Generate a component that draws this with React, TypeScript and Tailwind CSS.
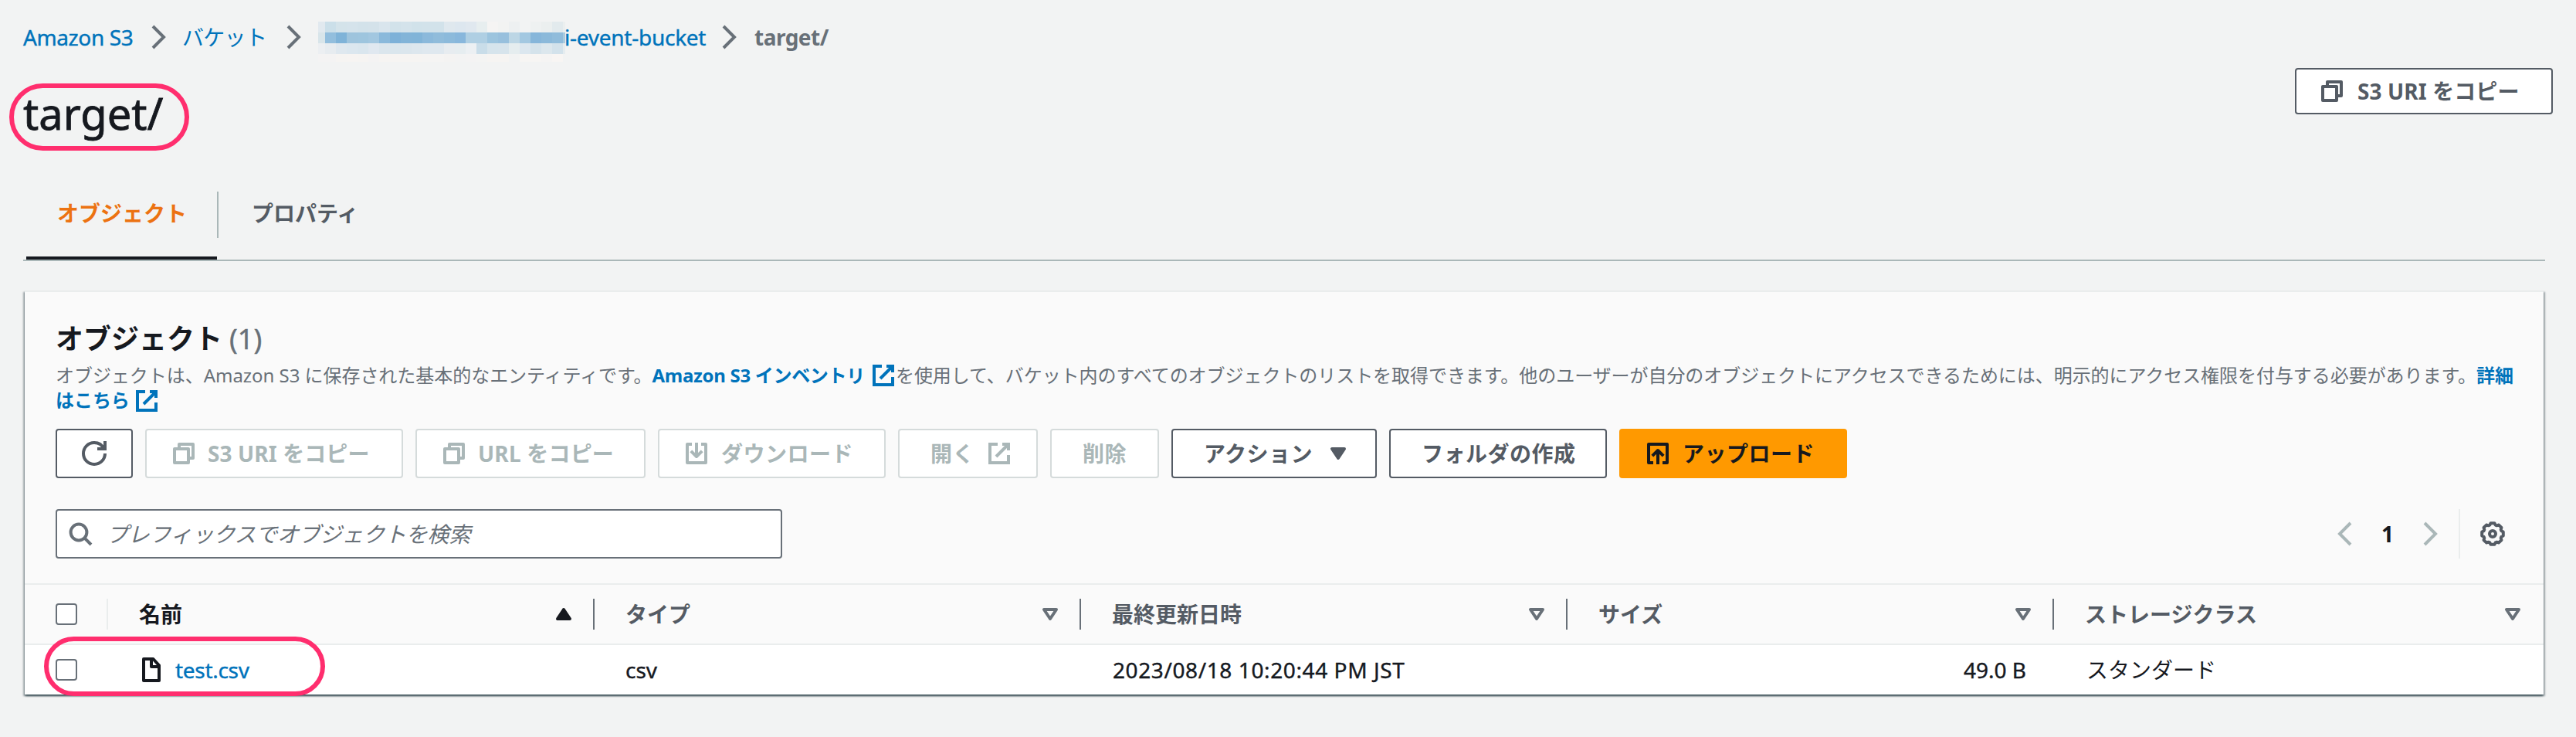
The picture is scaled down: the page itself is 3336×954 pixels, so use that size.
import type { ReactNode } from "react";

type IconName =
  | "copy" | "external" | "download" | "upload" | "refresh" | "search"
  | "chevronRight" | "chevronLeft" | "caret" | "sort" | "sortUp" | "file" | "gear";

const gearPoints = Array.from({ length: 8 })
  .flatMap((_, k) =>
    [[-18, 6.0], [-10, 7.0], [10, 7.0], [18, 6.0]].map(([offset, radius]) => {
      const angle = ((k * 45 + offset) * Math.PI) / 180;
      return `${(8 + radius * Math.sin(angle)).toFixed(2)},${(8 - radius * Math.cos(angle)).toFixed(2)}`;
    })
  )
  .join(" ");

const shapes: Record<IconName, ReactNode> = {
  copy: <path d="M2 5h9v9H2zM5 5V2h9v9h-3" />,
  external: <path d="M10 2h4v4M6 10l8-8M14 9v5H2V2h5" strokeLinejoin="miter" />,
  download: <path d="M11 2h3v12H2V2h3M8 1v9M4.4 6.4 8 10l3.6-3.6" />,
  upload: <path d="M5 14H2V2h12v12h-3M8 15V6M4.4 9.6 8 6l3.6 3.6" />,
  refresh: (
    <path d="M10 5h5V0M15 8a6.957 6.957 0 0 1-7 7 6.957 6.957 0 0 1-7-7 6.957 6.957 0 0 1 7-7 6.87 6.87 0 0 1 6.3 4" strokeLinejoin="miter" />
  ),
  search: (
    <>
      <circle cx="7" cy="7" r="5.2" />
      <path d="M10.7 10.7 15 15" />
    </>
  ),
  chevronRight: <path d="m4 1 7 7-7 7" strokeLinejoin="miter" />,
  chevronLeft: <path d="M12 1 5 8l7 7" strokeLinejoin="miter" />,
  caret: <path d="M4 5h8l-4 6z" fill="currentColor" />,
  sort: <path d="M4 5h8l-4 6z" />,
  sortUp: <path d="M4 11h8L8 5z" fill="currentColor" />,
  file: <path d="M3 1h6.2L13 5.2V15H3zM8 1v5h5" />,
  gear: (
    <>
      <polygon points={gearPoints} />
      <circle cx="8" cy="8" r="2" />
    </>
  ),
};

function Icon({ name, className = "" }: { name: IconName; className?: string }) {
  return (
    <svg
      viewBox="0 0 16 16"
      className={`h-8 w-8 shrink-0 overflow-visible ${className}`}
      fill="none"
      stroke="currentColor"
      strokeWidth={2}
      strokeLinejoin="round"
    >
      {shapes[name]}
    </svg>
  );
}

const maskRows = [
  { height: "h-[14px]", colors: "e1e9ef cbdfe9 d4e3ea d5e3eb d3e2ea d4e2ea d9e5ed d2e2ea d4e3eb d1e2ea d2e2ea d2e2ea dfe8ee dde7ef e0e8ef e7eeef f5f4f3 f2f3f2 edf0f1 f2f3f3 eef1f1 ebefef e2eaed ebefef" },
  { height: "h-[14px]", colors: "d8e5ea 92bedd 7fb3d8 9ec4dd 9ec5de a2c7e0 8ab9db 7db1d8 82b4d8 81b4d8 8bb9db 90bcdb 8cbadb 88b7dc afcfe3 afcfe3 9cc4de 98c0dd bcd6e5 a3c8e1 86b6da 8bb9da 90bcdb a9cbe0" },
  { height: "h-[14px]", colors: "eceff2 e7ecf0 dfe8ef dce7ef dae6ee e0e8f0 dbe6ed dae6ed dbe6ed dde7ee dfe8ef dfe8ef e7ecf0 e6edf0 ecf0f3 c9dde9 d6e4ec d7e4ec e5edef dce7ef d5e3eb dce7ed d3e2eb e5ecef" },
  { height: "h-[10px]", colors: "f4f3f3 f4f3f3 f6f4f2 f7f4f2 f6f4f2 f4f3f3 f6f4f2 f6f4f2 f6f4f2 f6f4f2 f5f4f3 f5f4f3 f4f3f2 f3f3f3 f4f3f3 f4f4f3 f6f4f2 f6f4f2 f2f3f3 f7f5f3 f7f5f3 f5f4f3 f8f5f3 f2f3f3" },
];

function MaskedName() {
  return (
    <div className="w-[320px]">
      {maskRows.map((row, i) => (
        <div key={i} className={`grid grid-cols-[9px_repeat(22,14px)_3px] ${row.height}`}>
          {row.colors.split(" ").map((c, j) => (
            <div key={j} style={{ backgroundColor: `#${c}` }} />
          ))}
        </div>
      ))}
    </div>
  );
}

function Button({
  children,
  className = "",
  disabled = false,
}: {
  children: ReactNode;
  className?: string;
  disabled?: boolean;
}) {
  const tone = disabled ? "border-[#d5dbdb] text-[#aab7b8]" : "border-[#545b64] text-[#545b64]";
  return (
    <button
      className={`flex shrink-0 items-center whitespace-nowrap rounded-[4px] border-2 bg-white text-[28px] font-bold tracking-[0.5px] ${tone} ${className}`}
    >
      {children}
    </button>
  );
}

function Checkbox() {
  return <div className="h-7 w-7 rounded-[4px] border-2 border-[#687078] bg-white" />;
}

const columns = [
  { label: "名前", sorted: true },
  { label: "タイプ" },
  { label: "最終更新日時" },
  { label: "サイズ" },
  { label: "ストレージクラス" },
];

const gridCols = "grid grid-cols-[108px_630px_630px_630px_630px_634px]";

export default function App() {
  return (
    <div className="relative h-[954px] w-[3336px] overflow-hidden bg-[#f2f3f3] text-[28px] leading-[40px] text-[#16191f] [font-family:'Noto_Sans','Noto_Sans_CJK_JP',sans-serif]">
      <nav className="flex h-[88px] items-start pl-[30px] pt-7 text-[#0073bb]">
        <span className="w-[160px] whitespace-nowrap tracking-[-0.4px] [-webkit-text-stroke:0.4px]">Amazon S3</span>
        <Icon name="chevronRight" className="mt-1 text-[#687078]" />
        <span className="ml-[14px] w-[129px] whitespace-nowrap tracking-[-0.7px]">バケット</span>
        <Icon name="chevronRight" className="mt-1 text-[#687078]" />
        <div className="ml-[15px]">
          <MaskedName />
        </div>
        <span className="-ml-px w-[198px] whitespace-nowrap tracking-[-0.25px] [-webkit-text-stroke:0.4px]">i-event-bucket</span>
        <Icon name="chevronRight" className="mt-1 text-[#687078]" />
        <span className="ml-4 font-bold tracking-[-0.5px] text-[#687078]">target/</span>
      </nav>

      <header className="flex h-[148px] items-start justify-between pl-[30px] pr-[30px]">
        <h1 className="mt-[22px] text-[56px] leading-[72px] [-webkit-text-stroke:0.8px]">target/</h1>
        <Button className="h-[60px] w-[334px] pl-8">
          <Icon name="copy" className="-ml-[2px]" />
          <span className="ml-[17px] tracking-[0.1px]">S3 URI をコピー</span>
        </Button>
      </header>

      <div className="ml-[30px] flex h-[102px] w-[3266px] items-stretch border-b-2 border-[#aab7b8] font-bold">
        <div className="ml-1 w-[247px] border-b-4 border-[#16191f] pl-10 pt-5 text-[#ec7211]">
          オブジェクト
        </div>
        <div className="mt-3 h-[60px] w-[2px] bg-[#aab7b8]" />
        <div className="pl-[43px] pt-5 text-[#545b64]">プロパティ</div>
      </div>

      <section className="ml-8 mt-[38px] w-[3262px] border-t-2 border-[#eaeded] bg-white shadow-[0_2px_2px_0_rgba(0,28,36,0.5),2px_2px_2px_0_rgba(0,28,36,0.3),-2px_2px_2px_0_rgba(0,28,36,0.3)]">
        <div className="h-[377px] bg-[#fafafa] pl-10">
          <h2 className="h-[92px] pt-[37px] text-[36px] font-bold leading-[48px]">
            オブジェクト<span className="ml-[9px] font-normal text-[#687078] [-webkit-text-stroke:0.4px]">(1)</span>
          </h2>
          <p className="h-[85px] whitespace-nowrap text-[24px] leading-8 tracking-[-0.05px] text-[#687078]">
            <span className="tracking-[-0.04px]">オブジェクトは、Amazon S3 に保存された基本的なエンティティです。</span>
            <a className="font-bold tracking-[-0.3px] text-[#0073bb]">
              Amazon S3 インベントリ
              <Icon name="external" className="-mt-1 ml-2 inline-block align-middle" />
            </a>
            を使用して、バケット内のすべてのオブジェクトのリストを取得できます。他のユーザーが自分のオブジェクトにアクセスできるためには、明示的にアクセス権限を付与する必要があります。
            <a className="font-bold text-[#0073bb]">
              詳細
              <br />
              はこちら
              <Icon name="external" className="-mt-1 ml-[6px] inline-block align-middle" />
            </a>
          </p>

          <div className="flex h-[104px] items-start gap-4">
            <Button className="h-16 w-[100px] justify-center">
              <Icon name="refresh" />
            </Button>
            <Button disabled className="h-16 w-[334px] pl-8">
              <Icon name="copy" />
              <span className="ml-[15px] tracking-[0.1px]">S3 URI をコピー</span>
            </Button>
            <Button disabled className="h-16 w-[298px] pl-8">
              <Icon name="copy" />
              <span className="ml-[15px] tracking-[0.2px]">URL をコピー</span>
            </Button>
            <Button disabled className="h-16 w-[295px] pl-8">
              <Icon name="download" />
              <span className="ml-4">ダウンロード</span>
            </Button>
            <Button disabled className="h-16 w-[181px] pl-10">
              <span>開く</span>
              <Icon name="external" className="ml-4" />
            </Button>
            <Button disabled className="h-16 w-[141px] pl-10">削除</Button>
            <Button className="h-16 w-[266px] pl-10">
              <span>アクション</span>
              <Icon name="caret" className="ml-[17px]" />
            </Button>
            <Button className="h-16 w-[282px] pl-10">フォルダの作成</Button>
            <button className="flex h-16 w-[295px] shrink-0 items-center rounded-[4px] bg-[#ff9900] pl-[34px] text-[28px] font-bold tracking-[0.5px] text-[#16191f]">
              <Icon name="upload" />
              <span className="ml-4 whitespace-nowrap">アップロード</span>
            </button>
          </div>

          <div className="flex h-16 items-center">
            <div className="flex h-16 w-[941px] items-center rounded-[4px] border-2 border-[#687078] bg-white pl-[14px] text-[#687078]">
              <Icon name="search" />
              <span className="ml-[18px] whitespace-nowrap italic tracking-[-0.2px]">プレフィックスでオブジェクトを検索</span>
            </div>
            <div className="ml-auto flex h-16 w-[274px] items-center">
              <Icon name="chevronLeft" className="text-[#aab7b8]" />
              <span className="w-20 text-center font-bold">1</span>
              <Icon name="chevronRight" className="text-[#aab7b8]" />
              <div className="ml-5 h-16 w-[2px] bg-[#eaeded]" />
              <Icon name="gear" className="ml-[26px] text-[#545b64]" />
            </div>
          </div>
        </div>

        <div className={`${gridCols} h-20 border-y-2 border-[#eaeded] bg-[#fafafa] font-bold`}>
          <div className="flex items-center pl-10">
            <Checkbox />
            <div className="ml-auto h-10 w-[2px] bg-[#eaeded]" />
          </div>
          {columns.map((col, i) => (
            <div key={col.label} className={`flex items-center pl-10 ${col.sorted ? "text-[#16191f]" : "text-[#545b64]"}`}>
              <span className="whitespace-nowrap">{col.label}</span>
              {col.sorted ? (
                <Icon name="sortUp" className="ml-auto" />
              ) : (
                <Icon name="sort" className={i === columns.length - 1 ? "ml-auto mr-6 text-[#687078]" : "ml-auto text-[#687078]"} />
              )}
              {i < columns.length - 1 && <div className="ml-[22px] h-10 w-[2px] bg-[#687078]" />}
            </div>
          ))}
        </div>

        <div className={`${gridCols} h-16 items-center bg-white`}>
          <div className="pl-10">
            <Checkbox />
          </div>
          <div className="flex items-center pl-10 text-[#0073bb]">
            <Icon name="file" className="text-[#16191f]" />
            <span className="ml-[15px] tracking-[-0.3px] [-webkit-text-stroke:0.4px]">test.csv</span>
          </div>
          <div className="pl-10 [-webkit-text-stroke:0.4px]">csv</div>
          <div className="pl-[41px] tracking-[0.6px] [-webkit-text-stroke:0.4px]">2023/08/18 10:20:44 PM JST</div>
          <div className="pr-9 text-right [-webkit-text-stroke:0.4px]">49.0 B</div>
          <div className="pl-[42px]">スタンダード</div>
        </div>
      </section>

      <div className="absolute left-[12px] top-[108px] h-[87px] w-[233px] rounded-full border-[6px] border-[#ff2e6e]" />
      <div className="absolute left-[57px] top-[824px] h-[77px] w-[364px] rounded-full border-[6px] border-[#ff2e6e]" />
    </div>
  );
}
